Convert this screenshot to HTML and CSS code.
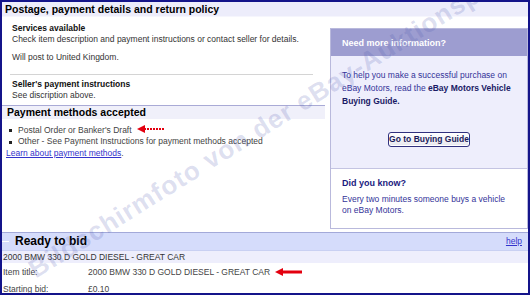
FILE: index.html
```
<!DOCTYPE html>
<html>
<head>
<meta charset="utf-8">
<link rel="stylesheet" href="styles.css">
</head>
<body>
<div class="frame">
  <div class="sec-head">Postage, payment details and return policy</div>
  <div class="cols">
    <div class="left">
      <div class="block services">
        <div class="b">Services available</div>
        <div>Check item description and payment instructions or contact seller for details.</div>
        <div class="post">Will post to United Kingdom.</div>
      </div>
      <div class="rule"></div>
      <div class="block seller">
        <div class="b">Seller's payment instructions</div>
        <div>See discription above.</div>
      </div>
      <div class="pm-head">Payment methods accepted</div>
      <ul class="methods">
        <li>Postal Order or Banker's Draft<svg class="arrow a1" width="27" height="8" viewBox="0 0 27 8"><polygon points="0,4 8,0 8,8" fill="#e3000f"/><line x1="7" y1="4" x2="27" y2="4" stroke="#e3000f" stroke-width="2" stroke-dasharray="2 1"/></svg></li>
        <li>Other - See Payment Instructions for payment methods accepted</li>
      </ul>
      <div class="learn"><a href="#">Learn about payment methods</a>.</div>
    </div>
    <aside class="panel">
      <div class="panel-head">Need more information?</div>
      <div class="panel-body">
        <p>To help you make a successful purchase on<br>eBay Motors, read the <b>eBay Motors Vehicle<br>Buying Guide.</b></p>
        <div class="btn-wrap"><button class="btn">Go to Buying Guide</button></div>
      </div>
      <div class="panel-know">
        <div class="know-title">Did you know?</div>
        <p>Every two minutes someone buys a vehicle<br>on eBay Motors.</p>
      </div>
    </aside>
  </div>
  <div class="bid">
    <div class="bid-head"><span class="tick"></span><span class="bid-title">Ready to bid</span><a href="#" class="help">help</a></div>
    <div class="bid-name">2000 BMW 330 D GOLD DIESEL - GREAT CAR</div>
    <div class="bid-row"><span class="lbl">Item title:</span><span>2000 BMW 330 D GOLD DIESEL - GREAT CAR</span><svg class="arrow a2" width="27" height="8" viewBox="0 0 27 8"><polygon points="0,4 8,0 8,8" fill="#e3000f"/><line x1="7" y1="4" x2="27" y2="4" stroke="#e3000f" stroke-width="3"/></svg></div>
    <div class="bid-row"><span class="lbl">Starting bid:</span><span>£0.10</span></div>
  </div>
  <div class="watermark">Bildschirmfoto von der eBay-Auktionsplattform</div>
</div>
</body>
</html>
```
FILE: styles.css
```
* { box-sizing: border-box; }
html, body { margin: 0; padding: 0; background: #fff; }
body { font-family: "Liberation Sans", Arial, sans-serif; }
.frame {
  position: relative;
  width: 530px;
  height: 295px;
  border: 2px solid #14148a;
  overflow: hidden;
  background: #fff;
  font-size: 8.5px;
  color: #333;
}
.sec-head {
  height: 15px;
  line-height: 15px;
  padding-left: 3px;
  font-weight: bold;
  font-size: 10.5px;
  color: #000;
  background: #ededfb;
  border-bottom: 1px solid #f6f6fd;
}
.cols { display: flex; align-items: flex-start; }
.left { width: 323px; margin-right: 5px; }
.block { padding-left: 10px; line-height: 11px; }
.services { padding-top: 5.5px; }
.b { font-weight: bold; color: #111; }
.post { margin-top: 7.5px; }
.rule { height: 1px; background: #d4d4d4; margin: 11px 12px 0 8px; }
.seller { padding-top: 4px; padding-bottom: 4px; }
.pm-head {
  border-top: 1px solid #a9aad6;
  background: #f0f0fa;
  height: 14px;
  line-height: 13px;
  padding-left: 5px;
  font-weight: bold;
  font-size: 10.5px;
  color: #000;
}
.methods {
  list-style: none;
  margin: 0;
  padding: 5.5px 0 0 16px;
  line-height: 11.5px;
  color: #444;
}
.methods li { position: relative; white-space: nowrap; }
.methods li::before {
  content: "";
  position: absolute;
  left: -9px;
  top: 4.5px;
  width: 3px;
  height: 3px;
  background: #222;
}
.arrow { display: inline-block; vertical-align: middle; }
.a1 { margin-left: 5px; margin-top: -2px; }
.learn { padding-left: 4px; line-height: 11px; color: #444; }
.learn a { color: #3333cc; text-decoration: underline; }
.panel {
  width: 198px;
  margin-top: 11px;
  border: 1px solid #b9b9dc;
  color: #333399;
}
.panel-head {
  height: 27px;
  line-height: 28px;
  background: #9d9dd0;
  color: #fff;
  font-weight: bold;
  font-size: 9px;
  padding-left: 11px;
}
.panel-body {
  background: #eeeefc;
  padding: 12.5px 11px 21px;
  border-bottom: 1px solid #c4c4e2;
}
.panel p { margin: 0; line-height: 13px; }
.panel-body b { color: #1a1a66; }
.btn-wrap { display: flex; justify-content: center; margin-top: 24px; }
.btn {
  font-family: "Liberation Sans", Arial, sans-serif;
  font-weight: bold;
  font-size: 8.5px;
  color: #1a1a5a;
  width: 82px;
  height: 15px;
  padding: 0;
  border: 1px solid #30307e;
  border-radius: 3px;
  background: linear-gradient(#ffffff, #e6e6ee);
  box-shadow: inset 0 0 0 1px #fff;
}
.panel-know { background: #fff; padding: 9.5px 11px 11.5px; }
.know-title { font-weight: bold; color: #1a1a80; line-height: 11px; font-size: 9px; }
.panel-know p { margin-top: 5px; line-height: 11px; }
.bid { margin-top: 3px; }
.bid-head {
  position: relative;
  display: flex;
  align-items: center;
  height: 19px;
  border-top: 1px solid #a3a9d9;
  border-bottom: 1px solid #c9d0f2;
  background: #d5dcfb;
  padding: 0 6px 0 13px;
}
.tick { position: absolute; left: 0; top: 8px; width: 7px; height: 1px; background: #fff; }
.bid-title { font-weight: bold; font-size: 12px; color: #000; flex: 1; }
.help { color: #3333cc; font-size: 8.5px; text-decoration: underline; }
.bid-name {
  background: #eeeefc;
  height: 12px;
  line-height: 12px;
  padding-left: 1px;
  color: #333;
}
.bid-row { display: flex; align-items: center; height: 17px; padding-left: 1px; padding-top: 1px; color: #444; }
.lbl { width: 85px; }
.a2 { margin-left: 5px; }
.watermark {
  position: absolute;
  left: 33px;
  top: 255px;
  height: 26px;
  line-height: 26px;
  font-weight: bold;
  font-size: 26px;
  letter-spacing: 1px;
  color: rgba(80, 90, 175, 0.2);
  white-space: nowrap;
  transform: rotate(-32deg);
  transform-origin: 0 80%;
  pointer-events: none;
}
```
